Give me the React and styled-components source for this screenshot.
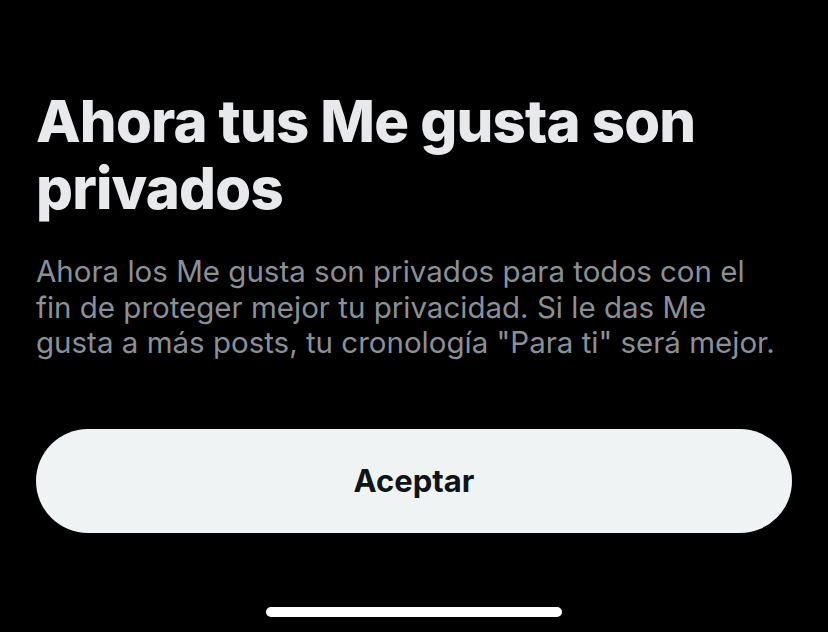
import React from "react";
import styled, { createGlobalStyle } from "styled-components";

const GlobalStyle = createGlobalStyle`
  html, body {
    margin: 0;
    padding: 0;
    background: #000;
  }
  body {
    font-family: Inter, "Noto Sans", sans-serif;
  }
`;

// full-screen sheet with the notice
const Screen = styled.div`
  width: 828px;
  height: 632px;
  box-sizing: border-box;
  background: #000;
  display: flex;
  flex-direction: column;
  padding: 88px 36px 0 36px;
`;

const Title = styled.h1`
  margin: 0;
  color: #e7e9ea;
  font-size: 58px;
  font-weight: 800;
  line-height: 67px;
  letter-spacing: -0.8px;
`;

const Body = styled.p`
  margin: 32px 0 0 0;
  color: #8b9096;
  font-size: 29.5px;
  font-weight: 400;
  line-height: 35.5px;
  white-space: nowrap;
`;

const AcceptButton = styled.button`
  margin-top: 68px;
  height: 104px;
  width: 756px;
  border: none;
  border-radius: 52px;
  background: #eff3f4;
  color: #0f1419;
  font-family: inherit;
  font-size: 31px;
  font-weight: 700;
  cursor: pointer;
`;

const HomeBar = styled.div`
  margin: auto auto 15px auto;
  width: 296px;
  height: 10px;
  border-radius: 5px;
  background: #fff;
`;

const App = () => {
  return (
    <>
      <GlobalStyle />
      <Screen>
        <Title>Ahora tus Me gusta son privados</Title>
        <Body>
          Ahora los Me gusta son privados para todos con el
          <br />
          fin de proteger mejor tu privacidad. Si le das Me
          <br />
          gusta a más posts, tu cronología "Para ti" será mejor.
        </Body>
        <AcceptButton>Aceptar</AcceptButton>
        <HomeBar />
      </Screen>
    </>
  );
};

export default App;
